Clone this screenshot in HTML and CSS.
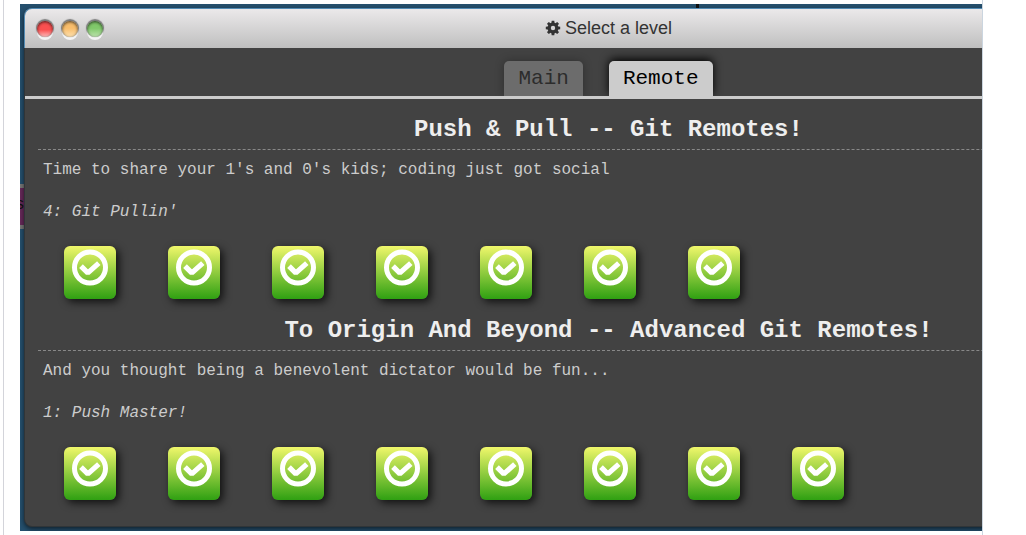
FILE: index.html
```html
<!DOCTYPE html>
<html lang="en">
<head>
<meta charset="utf-8">
<title>Select a level</title>
<link rel="stylesheet" href="styles.css">
</head>
<body>
<svg class="sprite" aria-hidden="true">
  <symbol id="check" viewBox="0 0 36 36">
    <circle cx="18" cy="18" r="15.5" fill="none" stroke="#fff" stroke-width="5"/>
    <path d="M9 16.6 15.8 23.4 26.8 13.6" fill="none" stroke="#fff" stroke-width="5.2" stroke-linejoin="bevel"/>
  </symbol>
</svg>
<main class="page">
  <div class="screen">
    <span class="branch-label">s</span>
    <span class="tree-line"></span>
    <section class="dialog">
      <header class="titlebar">
        <div class="controls">
          <button class="dot red" aria-label="Close"></button>
          <button class="dot amber" aria-label="Minimize"></button>
          <button class="dot green" aria-label="Maximize"></button>
        </div>
        <h1 class="title">
          <svg class="gear" viewBox="0 0 16 16" aria-hidden="true"><g fill="#333"><path fill-rule="evenodd" d="M8 2.6a5.4 5.4 0 1 0 0 10.8a5.4 5.4 0 1 0 0-10.8zM8 5.8a2.2 2.2 0 1 1 0 4.4a2.2 2.2 0 1 1 0-4.4z"/><path id="tooth" d="M6.7.8h2.6l.4 3H6.3z"/><use href="#tooth" transform="rotate(45 8 8)"/><use href="#tooth" transform="rotate(90 8 8)"/><use href="#tooth" transform="rotate(135 8 8)"/><use href="#tooth" transform="rotate(180 8 8)"/><use href="#tooth" transform="rotate(225 8 8)"/><use href="#tooth" transform="rotate(270 8 8)"/><use href="#tooth" transform="rotate(315 8 8)"/></g></svg>
          <span>Select a level</span>
        </h1>
      </header>
      <nav class="tabs">
        <button class="tab">Main</button>
        <button class="tab active">Remote</button>
      </nav>
      <div class="levels">
        <section class="series">
          <h2 class="series-title">Push &amp; Pull -- Git Remotes!</h2>
          <p class="about">Time to share your 1's and 0's kids; coding just got social</p>
          <p class="level-name">4: Git Pullin'</p>
          <div class="tiles">
            <button class="tile" aria-label="Level 1"><svg><use href="#check"/></svg></button>
            <button class="tile" aria-label="Level 2"><svg><use href="#check"/></svg></button>
            <button class="tile" aria-label="Level 3"><svg><use href="#check"/></svg></button>
            <button class="tile" aria-label="Level 4"><svg><use href="#check"/></svg></button>
            <button class="tile" aria-label="Level 5"><svg><use href="#check"/></svg></button>
            <button class="tile" aria-label="Level 6"><svg><use href="#check"/></svg></button>
            <button class="tile" aria-label="Level 7"><svg><use href="#check"/></svg></button>
          </div>
        </section>
        <section class="series">
          <h2 class="series-title">To Origin And Beyond -- Advanced Git Remotes!</h2>
          <p class="about">And you thought being a benevolent dictator would be fun...</p>
          <p class="level-name">1: Push Master!</p>
          <div class="tiles">
            <button class="tile" aria-label="Level 1"><svg><use href="#check"/></svg></button>
            <button class="tile" aria-label="Level 2"><svg><use href="#check"/></svg></button>
            <button class="tile" aria-label="Level 3"><svg><use href="#check"/></svg></button>
            <button class="tile" aria-label="Level 4"><svg><use href="#check"/></svg></button>
            <button class="tile" aria-label="Level 5"><svg><use href="#check"/></svg></button>
            <button class="tile" aria-label="Level 6"><svg><use href="#check"/></svg></button>
            <button class="tile" aria-label="Level 7"><svg><use href="#check"/></svg></button>
            <button class="tile" aria-label="Level 8"><svg><use href="#check"/></svg></button>
          </div>
        </section>
      </div>
    </section>
  </div>
</main>
</body>
</html>
```
FILE: styles.css
```css
* { box-sizing: border-box; }
body { margin: 0; background: #fff; font-family: "Liberation Mono", monospace; }
h1, h2, p { margin: 0; font-weight: normal; }
button { margin: 0; padding: 0; border: 0; font: inherit; }
.sprite { position: absolute; width: 0; height: 0; }
.page {
  margin: 0 43px 0 3px;
  padding: 4px 0 4px 16px;
  border-left: 1px solid #d3d4da;
  border-right: 1px solid #cbd5df;
}
.screen {
  position: relative;
  overflow: hidden;
  padding: 4px 0 4px 4px;
  background: #25506e;
}
/* Branch tag on the tree behind the dialog; only its edge shows. */
.branch-label {
  position: absolute;
  left: 0;
  top: 180px;
  width: 12px;
  height: 45px;
  border: solid #777;
  border-width: 4px 0;
  background: #66295a;
  color: #111;
  font-size: 16px;
  line-height: 34px;
  text-indent: -5px;
}
.tree-line { position: absolute; left: 676px; top: 0; width: 3px; height: 4px; background: #111; }
.dialog {
  position: relative;
  margin-right: -211px;
  padding-bottom: 25px;
  border: 1px solid #303538;
  border-top: 0;
  border-radius: 8px;
  background: #424242;
  box-shadow: 0 2px 5px rgba(0, 0, 0, .6);
}
.titlebar {
  display: grid;
  grid-template-columns: 1fr auto 1fr;
  align-items: center;
  height: 40px;
  margin: 0 -1px;
  padding: 0 12px;
  border: 1px solid #528bb4;
  border-bottom: 0;
  border-radius: 8px 8px 0 0;
  background: linear-gradient(#ebe9ea, #bfbfbf);
}
.controls { display: flex; gap: 9px; }
.dot {
  width: 16px;
  height: 16px;
  border-radius: 50%;
  box-shadow: inset 0 1px 3px rgba(0, 0, 0, .7), 0 -1px 1px 1px rgba(0, 0, 0, .45), 0 3px 0 #f4f4f4;
}
.red { background: linear-gradient(#fa5050 55%, #ffc0c0); }
.amber { background: linear-gradient(#f8bd6c 45%, #ffe2b0); }
.green { background: linear-gradient(#80c86a 45%, #bfe5b0); }
.title {
  display: flex;
  align-items: center;
  gap: 4px;
  padding-bottom: 2px;
  color: #333;
  font-family: "Liberation Sans", sans-serif;
  font-size: 18px;
  line-height: 20px;
}
.gear { width: 16px; height: 16px; }
.tabs {
  display: flex;
  justify-content: center;
  gap: 26px;
  padding-top: 13px;
  border-bottom: 3px solid #ccc;
  font-size: 21px;
  line-height: 35px;
}
.tab {
  padding: 0 14px;
  border-radius: 5px 5px 0 0;
  background: #6c6c6c;
  color: #2c2c2c;
  box-shadow: 0 0 10px rgba(0, 0, 0, .3);
  clip-path: inset(-15px -15px 0);
}
.active { background: #ccc; color: #000; box-shadow: 0 -2px 10px #000; }
.levels { padding: 0 13px; color: #ccc; font-size: 16px; }
.series { padding-bottom: 1px; }
.series-title {
  padding: 13px 0 1px;
  border-bottom: 1px dashed #888;
  color: #eee;
  font-size: 24px;
  font-weight: bold;
  line-height: 36px;
  text-align: center;
}
.about { padding-left: 5px; line-height: 40px; }
.level-name { padding-left: 5px; line-height: 44px; font-style: italic; }
.tiles { display: flex; flex-wrap: wrap; gap: 52px; padding: 12px 26px 0; }
.tile {
  display: flex;
  justify-content: center;
  width: 52px;
  height: 53px;
  padding-top: 3px;
  border-radius: 6px;
  background: linear-gradient(#f0f76b, #2fa012);
  box-shadow: 3px 3px 8px rgba(0, 0, 0, .75);
}
.tile svg { width: 36px; height: 37px; }
```
